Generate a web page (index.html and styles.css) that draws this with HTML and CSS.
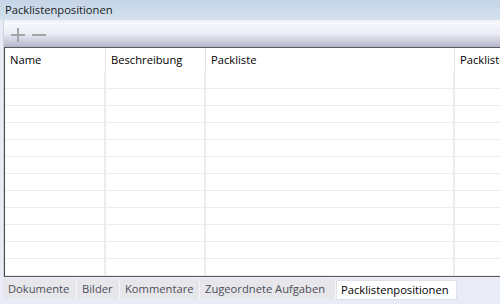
FILE: index.html
```html
<!DOCTYPE html>
<html lang="de">
<head>
    <meta charset="UTF-8">
    <title>Packlistenpositionen</title>
    <link rel="stylesheet" href="styles.css">
</head>
<body>
    <div class="title">Packlistenpositionen</div>
    <div class="frame">
        <div class="toolbar">
            <svg class="tool" width="16" height="16" viewBox="0 0 16 16">
                <rect x="1" y="7" width="14" height="2" fill="#a3a3a8"/>
                <rect x="7" y="1" width="2" height="14" fill="#a3a3a8"/>
            </svg>
            <svg class="tool" width="16" height="16" viewBox="0 0 16 16">
                <rect x="1" y="7" width="14" height="2" fill="#a3a3a8"/>
            </svg>
        </div>
        <div class="grid">
            <div class="row head">
                <div class="cell c1">Name</div>
                <div class="cell c2">Beschreibung</div>
                <div class="cell c3">Packliste</div>
                <div class="cell c4">Packliste</div>
            </div>
            <div class="body">
                <div class="row"><div class="cell c1"></div><div class="cell c2"></div><div class="cell c3"></div><div class="cell c4"></div></div>
                <div class="row"><div class="cell c1"></div><div class="cell c2"></div><div class="cell c3"></div><div class="cell c4"></div></div>
                <div class="row"><div class="cell c1"></div><div class="cell c2"></div><div class="cell c3"></div><div class="cell c4"></div></div>
                <div class="row"><div class="cell c1"></div><div class="cell c2"></div><div class="cell c3"></div><div class="cell c4"></div></div>
                <div class="row"><div class="cell c1"></div><div class="cell c2"></div><div class="cell c3"></div><div class="cell c4"></div></div>
                <div class="row"><div class="cell c1"></div><div class="cell c2"></div><div class="cell c3"></div><div class="cell c4"></div></div>
                <div class="row"><div class="cell c1"></div><div class="cell c2"></div><div class="cell c3"></div><div class="cell c4"></div></div>
                <div class="row"><div class="cell c1"></div><div class="cell c2"></div><div class="cell c3"></div><div class="cell c4"></div></div>
                <div class="row"><div class="cell c1"></div><div class="cell c2"></div><div class="cell c3"></div><div class="cell c4"></div></div>
                <div class="row"><div class="cell c1"></div><div class="cell c2"></div><div class="cell c3"></div><div class="cell c4"></div></div>
                <div class="row"><div class="cell c1"></div><div class="cell c2"></div><div class="cell c3"></div><div class="cell c4"></div></div>
                <div class="row"><div class="cell c1"></div><div class="cell c2"></div><div class="cell c3"></div><div class="cell c4"></div></div>
            </div>
        </div>
    </div>
    <div class="tabs">
        <div class="tab t1">Dokumente</div>
        <div class="tab t2">Bilder</div>
        <div class="tab t3">Kommentare</div>
        <div class="tab t4">Zugeordnete Aufgaben</div>
        <div class="tab active">Packlistenpositionen</div>
    </div>
</body>
</html>
```

FILE: styles.css
```css
html, body {
    margin: 0;
    width: 500px;
    height: 304px;
    overflow: hidden;
}
body {
    font-family: "Open Sans", "Noto Sans", sans-serif;
    font-size: 11.2px;
    background: #e9ebf7;
    color: #000;
}
.title {
    height: 20px;
    line-height: 19px;
    padding-left: 5px;
    background: linear-gradient(#c5d5e7, #d3e1ee);
    color: #1a1a1a;
}
.frame {
    margin-left: 3px;
    width: 520px;
    height: 257px;
    padding-top: 2px;
    background: #eef1f6;
    border-left: 1px solid #cfd3dc;
    box-sizing: border-box;
}
.toolbar {
    height: 25px;
    display: flex;
    align-items: center;
    gap: 5px;
    padding-left: 6px;
    background: linear-gradient(#f7f8fc 0%, #eceef6 45%, #b4b4c9 100%);
}
.tool {
    display: block;
}
.grid {
    height: 230px;
    background: #fff;
    border-top: 1px solid #5a5a5a;
    border-left: 1px solid #4a4a4a;
    border-bottom: 1px solid #5a5a5a;
    box-sizing: border-box;
    overflow: hidden;
}
.row {
    display: flex;
    height: 17px;
    box-sizing: border-box;
    border-bottom: 1px solid #ededed;
}
.row.head {
    height: 24px;
    border-bottom: none;
    align-items: stretch;
}
.cell {
    box-sizing: border-box;
    border-right: 2px solid #ededed;
    flex: none;
    white-space: nowrap;
    overflow: hidden;
}
.head .cell {
    padding: 4px 0 0 5px;
    line-height: 16px;
    border-right-width: 1px;
    border-right-color: #e2e2e2;
    margin-bottom: 1px;
}
.c1 { width: 101px; }
.c2 { width: 100px; }
.c3 { width: 249px; }
.c4 { width: 60px; border-right: none; }
.head .c4 { border-right: none; }
.tabs {
    display: flex;
    height: 27px;
    padding: 2px 0 0 3px;
    box-sizing: border-box;
    background: #e9ebf7;
}
.tab {
    height: 20px;
    line-height: 20px;
    padding: 0 5px;
    background: #e6e6eb;
    color: #4e4e58;
    border-right: 1px solid #f4f4f8;
    box-sizing: border-box;
    white-space: nowrap;
    overflow: hidden;
    flex: none;
}
.t1 { width: 74px; }
.t2 { width: 43px; }
.t3 { width: 80px; }
.t4 { width: 136px; }
.tab.active {
    width: 121px;
    margin-top: 1px;
    background: #fff;
    color: #000;
    border: 1px solid #e0e0e6;
    line-height: 18px;
    padding-left: 4px;
}
```
